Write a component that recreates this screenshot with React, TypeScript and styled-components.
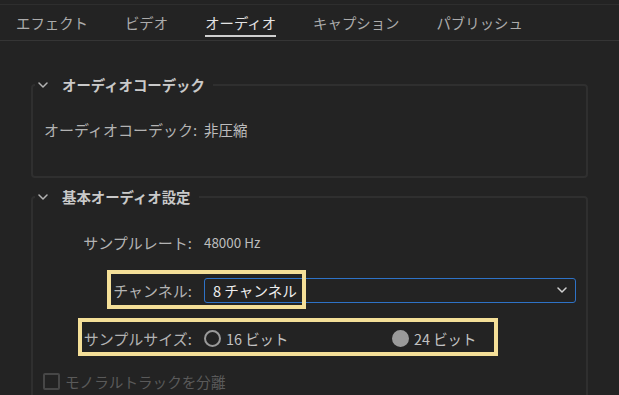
import React from 'react';
import styled, { createGlobalStyle } from 'styled-components';

const tabs = ['エフェクト', 'ビデオ', 'オーディオ', 'キャプション', 'パブリッシュ'];

const Chevron: React.FC<{ color?: string }> = ({ color = '#b3b3b3' }) => (
  <svg width="10" height="6" viewBox="0 0 10 6">
    <path d="M1 1 L5 5 L9 1" fill="none" stroke={color} strokeWidth="1.5" strokeLinecap="round" strokeLinejoin="round" />
  </svg>
);

const App: React.FC = () => {
  return (
    <Page>
      <GlobalStyle />
      <TabBar>
        {tabs.map((t) => (
          <Tab key={t} active={t === 'オーディオ'}>{t}</Tab>
        ))}
      </TabBar>

      <Content>
        <Section>
          <Legend>
            <Chevron />
            <LegendTitle>オーディオコーデック</LegendTitle>
          </Legend>
          <CodecBody>
            <Row>
              <Label>オーディオコーデック:</Label>
              <Value>非圧縮</Value>
            </Row>
          </CodecBody>
        </Section>

        <Section spaced>
          <Legend>
            <Chevron />
            <LegendTitle>基本オーディオ設定</LegendTitle>
          </Legend>
          <BasicBody>
            <Row>
              <Label>サンプルレート:</Label>
              <Value small>48000 Hz</Value>
            </Row>
            <Row>
              <Label>チャンネル:</Label>
              <Select>
                <span>8 チャンネル</span>
                <Chevron color="#d0d0d0" />
              </Select>
              <Highlight style={{ left: 63, width: 199, height: 39 }} />
            </Row>
            <Row>
              <Label>サンプルサイズ:</Label>
              <RadioGroup>
                <RadioOption>
                  <Radio />
                  <span>16 ビット</span>
                </RadioOption>
                <RadioOption>
                  <Radio checked />
                  <span>24 ビット</span>
                </RadioOption>
              </RadioGroup>
              <Highlight style={{ left: 34, width: 420, height: 38 }} />
            </Row>
            <CheckRow>
              <CheckBox />
              <span>モノラルトラックを分離</span>
            </CheckRow>
          </BasicBody>
        </Section>
      </Content>
    </Page>
  );
};

const GlobalStyle = createGlobalStyle`
  body {
    margin: 0;
    background: #232323;
    font-family: "Noto Sans CJK JP", "Noto Sans", sans-serif;
  }
`;

const Page = styled.div`
  width: 619px;
  height: 395px;
  overflow: hidden;
  padding-top: 4px;
  box-sizing: border-box;
  background: #232323;
`;

const TabBar = styled.div`
  display: flex;
  gap: 37px;
  height: 35px;
  padding: 0 16px;
  border-top: 1px solid #2e2e2e;
  border-bottom: 1px solid #353535;
`;

const Tab = styled.div<{ active?: boolean }>`
  position: relative;
  display: flex;
  align-items: center;
  font-size: 14.4px;
  color: ${(p) => (p.active ? '#e3e3e3' : '#ababab')};

  &::after {
    content: '';
    display: ${(p) => (p.active ? 'block' : 'none')};
    position: absolute;
    left: 0;
    right: 0;
    bottom: 3px;
    height: 2px;
    background: #cfcfcf;
  }
`;

const Content = styled.div`
  padding: 34px 31px 0 31px;
`;

const Section = styled.fieldset<{ spaced?: boolean }>`
  margin: ${(p) => (p.spaced ? '9px' : '0')} 0 0 0;
  padding: 0 10px 0 11px;
  min-width: 0;
  border: 2px solid #2f2f2f;
  border-radius: 4px;
`;

const Legend = styled.legend`
  display: flex;
  align-items: center;
  gap: 14px;
  margin-left: -9px;
  padding: 0 8px 0 3px;
  line-height: 20px;
`;

const LegendTitle = styled.span`
  font-size: 14.4px;
  font-weight: 700;
  color: #c9c9c9;
`;

const CodecBody = styled.div`
  padding: 24px 0 36px;
`;

const BasicBody = styled.div`
  padding-top: 11px;
`;

const Row = styled.div`
  position: relative;
  display: grid;
  grid-template-columns: 148px 1fr;
  column-gap: 12px;
  align-items: center;
  min-height: 20px;

  ${BasicBody} > & {
    height: 48px;
  }
`;

const Label = styled.div`
  text-align: right;
  font-size: 15px;
  color: #b3b3b3;
  white-space: nowrap;
`;

const Value = styled.div<{ small?: boolean }>`
  font-size: ${(p) => (p.small ? '13.4px' : '14.5px')};
  color: #bdbdbd;
`;

const Select = styled.div`
  display: flex;
  align-items: center;
  justify-content: space-between;
  height: 25px;
  box-sizing: border-box;
  padding: 0 8px;
  border: 1.5px solid #2e72c6;
  border-radius: 3px;
  font-size: 14.6px;
  color: #ededed;
`;

const Highlight = styled.div`
  position: absolute;
  top: 4px;
  box-sizing: border-box;
  border: 4px solid #f4df98;
  pointer-events: none;
`;

const RadioGroup = styled.div`
  display: grid;
  grid-template-columns: 188px auto;
`;

const RadioOption = styled.div`
  display: flex;
  align-items: center;
  gap: 5px;
  font-size: 14.4px;
  color: #c2c2c2;
`;

const Radio = styled.span<{ checked?: boolean }>`
  width: 17px;
  height: 17px;
  box-sizing: border-box;
  border-radius: 50%;
  border: 2.5px solid #9a9a9a;
  background: ${(p) => (p.checked ? '#9a9a9a' : 'transparent')};
`;

const CheckRow = styled.div`
  display: flex;
  align-items: center;
  gap: 5px;
  height: 38px;
  margin-left: -1px;
  font-size: 14.6px;
  color: #5a5a5a;
`;

const CheckBox = styled.span`
  width: 17px;
  height: 17px;
  box-sizing: border-box;
  border: 2px solid #474747;
  border-radius: 2px;
`;

export default App;
